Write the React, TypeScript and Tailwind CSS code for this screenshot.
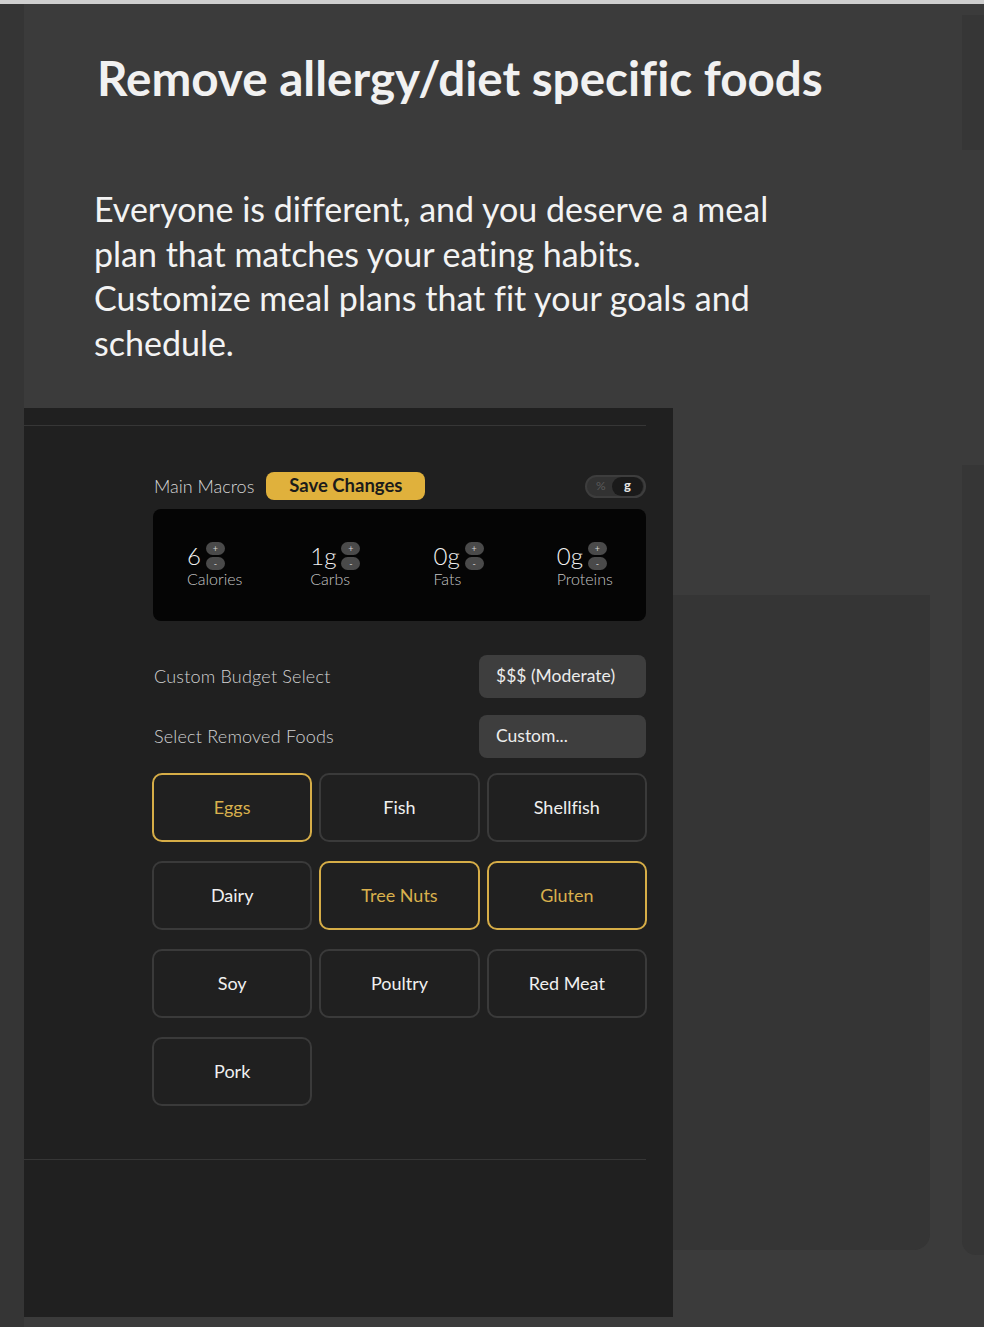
import React from "react";

type Food = { name: string; selected?: boolean };

const foods: Food[] = [
  { name: "Eggs", selected: true },
  { name: "Fish" },
  { name: "Shellfish" },
  { name: "Dairy" },
  { name: "Tree Nuts", selected: true },
  { name: "Gluten", selected: true },
  { name: "Soy" },
  { name: "Poultry" },
  { name: "Red Meat" },
  { name: "Pork" },
];

const macros = [
  { value: "6", label: "Calories" },
  { value: "1g", label: "Carbs" },
  { value: "0g", label: "Fats" },
  { value: "0g", label: "Proteins" },
];

function Stepper() {
  return (
    <div className="flex flex-col gap-[2px]">
      <span className="flex h-[13px] w-[19px] items-center justify-center rounded-full bg-[#4a4a4a] text-[9px] leading-none text-[#cfcfcf]">
        +
      </span>
      <span className="flex h-[13px] w-[19px] items-center justify-center rounded-full bg-[#4a4a4a] text-[9px] leading-none text-[#cfcfcf]">
        -
      </span>
    </div>
  );
}

function MacroStat({ value, label }: { value: string; label: string }) {
  return (
    <div className="flex flex-col pl-[34px]">
      <div className="flex items-center gap-[5px]">
        <span className="text-[24px] font-light leading-none text-[#f2f2f2]">{value}</span>
        <Stepper />
      </div>
      <span className="text-[16px] font-light leading-[18px] text-[#c4c4c4]">{label}</span>
    </div>
  );
}

function SelectRow({ label, value }: { label: string; value: string }) {
  return (
    <div className="flex items-center justify-between">
      <span className="pl-px text-[18px] font-light tracking-[0.2px] text-[#d2d2d2]">{label}</span>
      <div className="flex h-[43px] w-[167px] items-center rounded-[8px] bg-[#3e3e3e] pl-[17px] text-[17.5px] text-[#ececec]">
        {value}
      </div>
    </div>
  );
}

export default function App() {
  return (
    <div className="flex h-[1327px] w-[984px] flex-col overflow-hidden bg-[#3b3b3b] font-['Lato',sans-serif] [font-variant-ligatures:none]">
      <div className="h-[4px] bg-[#cfcfcf]" />

      <div className="flex min-h-0 flex-1">
        {/* left gutter */}
        <div className="w-[24px] bg-[#353535]" />

        <div className="flex flex-1 flex-col">
          {/* Header copy */}
          <div className="h-[404px] pt-[45px]">
            <h1 className="pl-[73px] text-[47.6px] font-bold leading-[1.2] text-[#f1f1f1]">
              Remove allergy/diet specific foods
            </h1>
            <p className="mt-[81px] pl-[70px] text-[34px] leading-[44.5px] text-[#f3f3f3]">
              Everyone is different, and you deserve a meal
              <br />
              plan that matches your eating habits.
              <br />
              Customize meal plans that fit your goals and
              <br />
              schedule.
            </p>
          </div>

          <div className="flex flex-1">
            {/* Settings panel */}
            <div className="flex h-[909px] w-[649px] flex-col bg-[#202020]">
              <div className="mr-[27px] mt-[17px] h-px bg-[#363636]" />

              <div className="ml-[129px] mt-[46px] w-[493px]">
                {/* Main macros header */}
                <div className="flex h-[28px] items-center">
                  <span className="pl-px text-[18px] font-light text-[#d6d6d6]">Main Macros</span>
                  <button className="ml-[12px] flex h-[28px] items-center rounded-[8px] bg-[#e0b13c] px-[23px] text-[18.5px] font-bold text-[#1b1b1b]">
                    Save Changes
                  </button>
                  <div className="ml-auto flex h-[23px] w-[61px] items-center rounded-full border-2 border-[#3d3d3d] bg-[#323232] pl-[9px] pr-[1px]">
                    <span className="text-[12px] text-[#5a5a5a]">%</span>
                    <span className="ml-auto flex h-[19px] w-[31px] items-center justify-center rounded-full bg-[#1a1a1a] text-[13px] font-bold text-[#e8e8e8]">
                      g
                    </span>
                  </div>
                </div>

                {/* Macro values */}
                <div className="mt-[9px] grid h-[112px] grid-cols-4 items-center rounded-[8px] bg-[#050505]">
                  {macros.map((m) => (
                    <MacroStat key={m.label} value={m.value} label={m.label} />
                  ))}
                </div>

                <div className="mt-[34px]">
                  <SelectRow label="Custom Budget Select" value="$$$ (Moderate)" />
                </div>
                <div className="mt-[17px]">
                  <SelectRow label="Select Removed Foods" value="Custom..." />
                </div>

                {/* Food chips */}
                <div className="-ml-px mt-[15px] grid w-[495px] grid-cols-3 gap-x-[7px] gap-y-[19px]">
                  {foods.map((f) => (
                    <div
                      key={f.name}
                      className={
                        f.selected
                          ? "flex h-[69px] items-center justify-center rounded-[10px] border-2 border-[#d6ad47] text-[18px] text-[#d9b04d]"
                          : "flex h-[69px] items-center justify-center rounded-[10px] border-2 border-[#3a3a3a] text-[18px] text-[#f0f0f0]"
                      }
                    >
                      {f.name}
                    </div>
                  ))}
                </div>
              </div>

              <div className="mr-[27px] mt-[53px] h-px bg-[#363636]" />
            </div>

            {/* faded background card */}
            <div className="flex-1">
              <div className="mt-[187px] h-[655px] w-[257px] rounded-br-[16px] bg-[#353535]" />
            </div>
          </div>
        </div>

        {/* right gutter */}
        <div className="flex w-[22px] flex-col">
          <div className="mt-[11px] h-[135px] bg-[#363636]" />
          <div className="mt-[315px] h-[790px] rounded-bl-[14px] bg-[#363636]" />
        </div>
      </div>
    </div>
  );
}
